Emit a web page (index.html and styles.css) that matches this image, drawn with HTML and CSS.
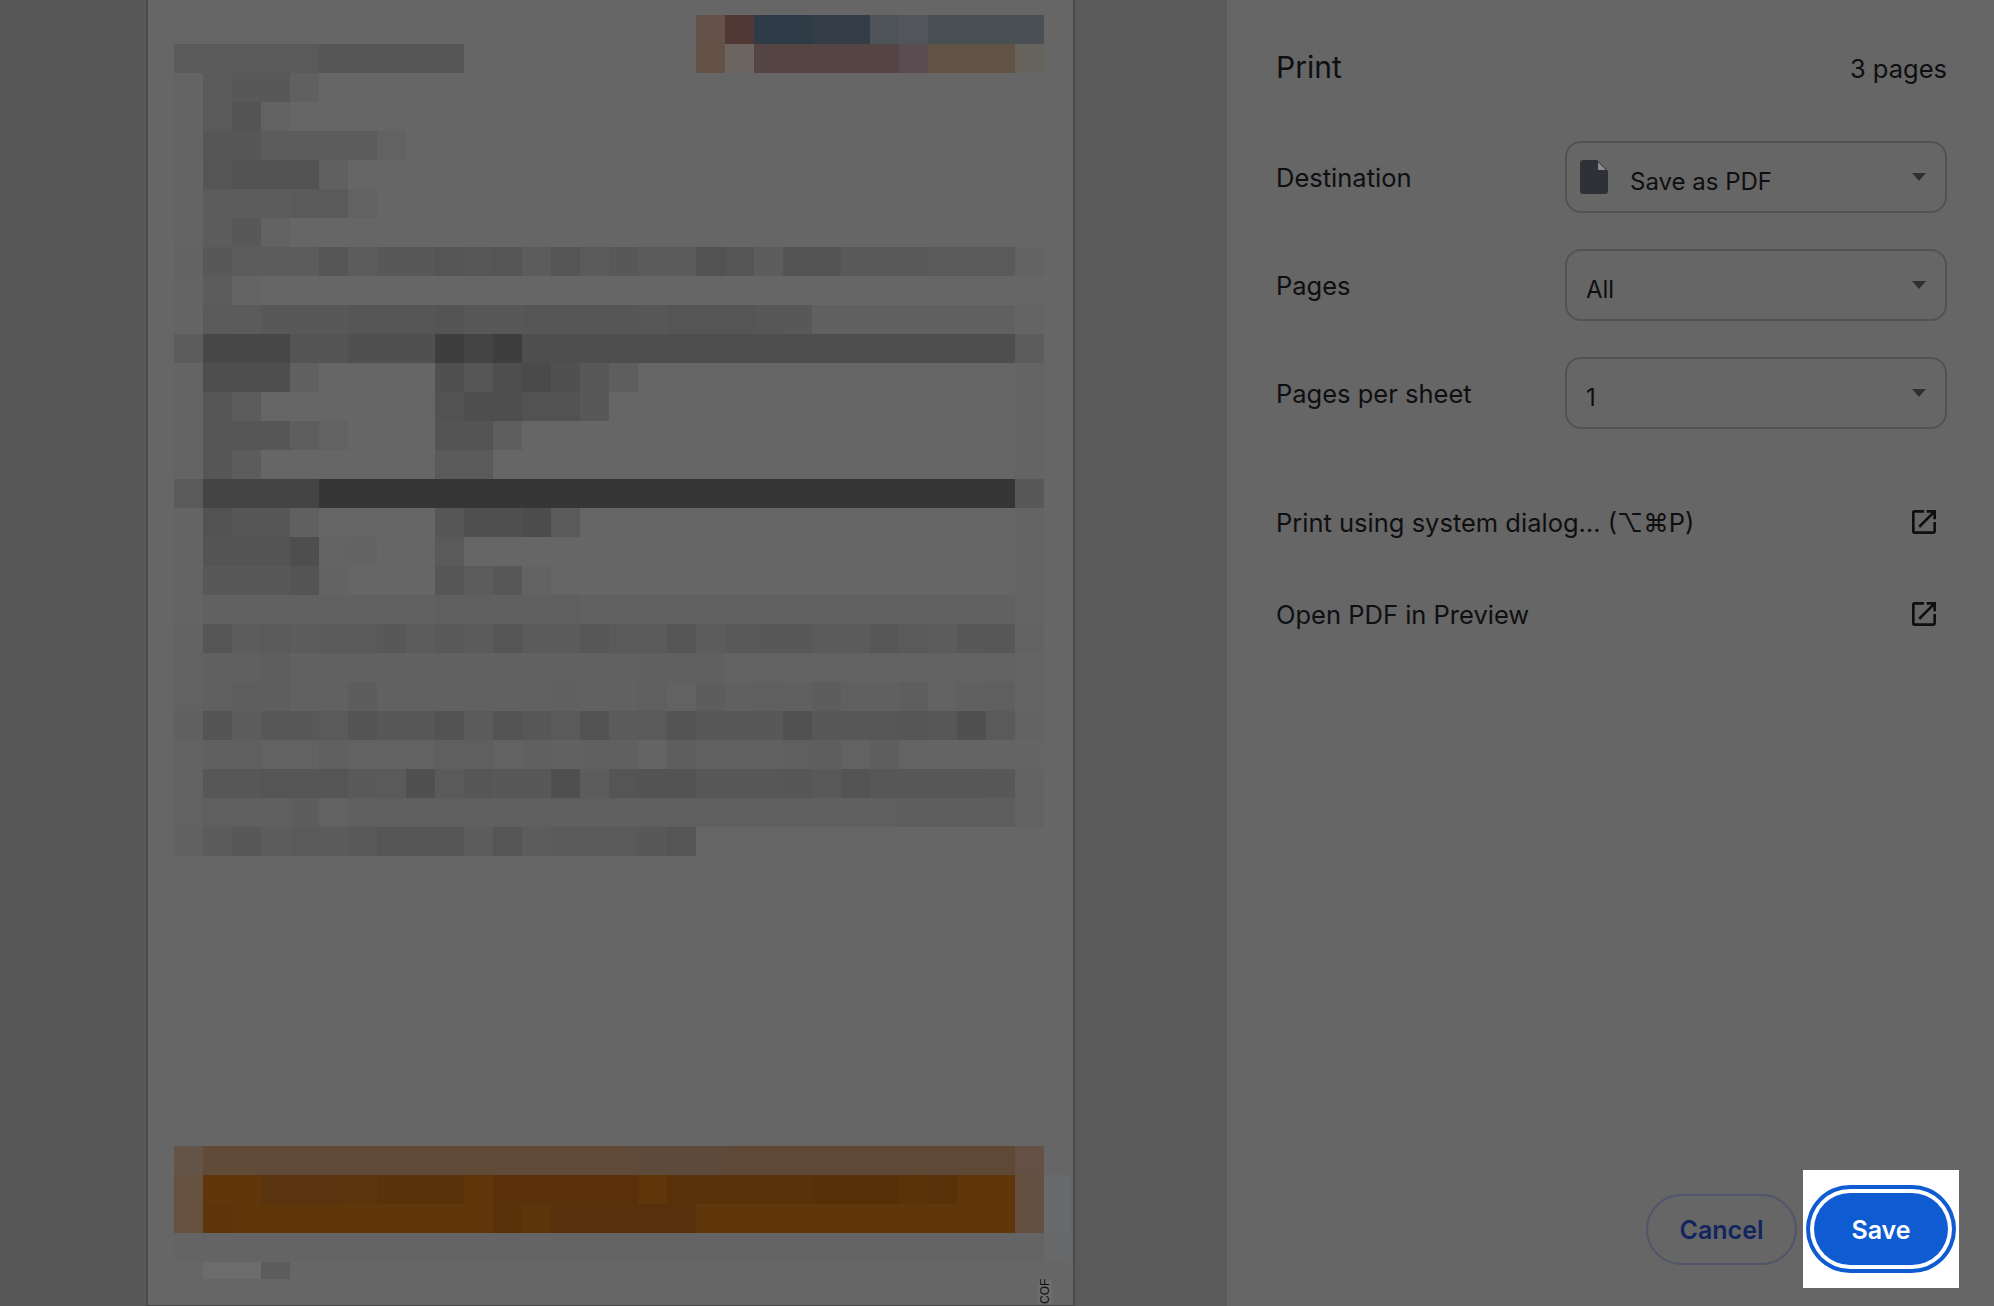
FILE: index.html
```html
<!DOCTYPE html>
<html lang="en">
<head>
<meta charset="utf-8">
<title>Print</title>
<link rel="stylesheet" href="styles.css">
</head>
<body>
<main class="preview">
  <section class="sheet">
    <div class="mosaic" id="mosaic"></div>
    <span class="stamp">COF</span>
  </section>
</main>
<aside class="panel">
  <header class="panel-head">
    <h1 class="panel-title">Print</h1>
    <span class="panel-count">3 pages</span>
  </header>
  <div class="settings">
    <div class="setting">
      <span class="setting-label">Destination</span>
      <div class="select select-icon">
        <svg class="doc-icon" viewBox="0 0 28 34" aria-hidden="true">
          <path class="doc-body" d="M3 0H17L28 11V31a3 3 0 0 1-3 3H3a3 3 0 0 1-3-3V3a3 3 0 0 1 3-3z"/>
          <path class="doc-fold" d="M18 2V10H26z"/>
        </svg>
        <span class="select-value">Save as PDF</span>
        <i class="caret"></i>
      </div>
    </div>
    <div class="setting">
      <span class="setting-label">Pages</span>
      <div class="select">
        <span class="select-value">All</span>
        <i class="caret"></i>
      </div>
    </div>
    <div class="setting">
      <span class="setting-label">Pages per sheet</span>
      <div class="select">
        <span class="select-value">1</span>
        <i class="caret"></i>
      </div>
    </div>
  </div>
  <nav class="links">
    <a class="link">
      <span class="link-text">Print using system dialog… (⌥⌘P)</span>
      <svg class="open-icon" viewBox="0 0 24 24" aria-hidden="true"><path d="M19 19H5V5h7V3H5a2 2 0 0 0-2 2v14a2 2 0 0 0 2 2h14c1.100 0 2-.9 2-2v-7h-2v7zM14 3v2h3.590l-9.830 9.830 1.410 1.410L19 6.410V10h2V3h-7z"/></svg>
    </a>
    <a class="link">
      <span class="link-text">Open PDF in Preview</span>
      <svg class="open-icon" viewBox="0 0 24 24" aria-hidden="true"><path d="M19 19H5V5h7V3H5a2 2 0 0 0-2 2v14a2 2 0 0 0 2 2h14c1.100 0 2-.9 2-2v-7h-2v7zM14 3v2h3.590l-9.830 9.830 1.410 1.410L19 6.410V10h2V3h-7z"/></svg>
    </a>
  </nav>
  <footer class="actions">
    <button class="btn btn-cancel">Cancel</button>
    <div class="spotlight">
      <button class="btn btn-save">Save</button>
    </div>
  </footer>
</aside>
<script src="mosaic.js"></script>
</body>
</html>
```

FILE: styles.css
```css
* { box-sizing: border-box; }

html, body { margin: 0; height: 100%; }

body {
  display: flex;
  width: 1994px;
  height: 1306px;
  overflow: hidden;
  background: #585858;
  color: #0e0f11;
  font-family: Inter, "Liberation Sans", sans-serif;
}

.preview {
  display: flex;
  flex: 0 0 1227px;
  padding-left: 146px;
  background: linear-gradient(to right, #585858 146px, #5a5a5a 146px);
}

.sheet {
  position: relative;
  flex: 0 0 929px;
  height: 1306px;
  padding: 15px 0 0 26px;
  background: #666;
  border-left: 2px solid #4a4a4a;
  border-right: 2px solid #4a4a4a;
  border-bottom: 1px solid #444;
}

.mosaic {
  display: grid;
  grid-template-columns: repeat(30, 29px) 27px;
  grid-template-rows: repeat(43, 29px) 17px;
}

.stamp {
  position: absolute;
  left: 890px;
  top: 1280px;
  padding: 0 1px;
  height: 24px;
  writing-mode: vertical-rl;
  transform: rotate(180deg);
  background: #6e6e6e;
  color: #0e0e0e;
  font-family: "Liberation Sans", sans-serif;
  font-size: 12px;
  line-height: 12px;
}

.panel {
  display: flex;
  flex-direction: column;
  flex: 0 0 767px;
  height: 1306px;
  padding: 0 47px 0 49px;
  background: #666;
}

.panel-head {
  display: flex;
  justify-content: space-between;
  align-items: baseline;
  height: 141px;
  padding-top: 49px;
}

.panel-title {
  margin: 0;
  font-size: 30px;
  line-height: 36px;
  font-weight: 400;
}

.panel-count {
  font-size: 25.500px;
  line-height: 36px;
}

.settings {
  display: flex;
  flex-direction: column;
  gap: 36px;
}

.setting {
  display: flex;
  align-items: center;
  justify-content: space-between;
  height: 72px;
}

.setting-label,
.link-text {
  padding-top: 1px;
  font-size: 25.500px;
}

.select {
  display: flex;
  align-items: center;
  width: 382px;
  height: 72px;
  padding: 0 19px 0 19px;
  border: 2px solid #525252;
  border-radius: 16px;
}

.select-icon {
  padding-left: 13px;
  gap: 22px;
}

.select-value {
  padding-top: 8px;
  font-size: 24px;
}

.doc-icon {
  flex: none;
  width: 28px;
  height: 34px;
}

.doc-body { fill: #2e3136; }
.doc-fold { fill: #8c8c8c; }

.caret {
  flex: none;
  width: 0;
  height: 0;
  margin-left: auto;
  border-style: solid;
  border-width: 8px 7px 0;
  border-color: #303030 transparent transparent;
}

.links {
  display: flex;
  flex-direction: column;
  margin-top: 47px;
}

.link {
  display: flex;
  align-items: center;
  justify-content: space-between;
  height: 92px;
}

.open-icon {
  flex: none;
  width: 32px;
  height: 32px;
  margin-right: 7px;
  fill: #0e0f11;
}

.actions {
  display: flex;
  align-items: center;
  justify-content: flex-end;
  gap: 6px;
  margin: auto -12px 0 0;
  padding-bottom: 18px;
}

.btn {
  height: 72px;
  padding: 2px 0 0;
  border: 0;
  border-radius: 36px;
  font-family: inherit;
  font-size: 25px;
  font-weight: 600;
}

.btn-cancel {
  width: 151px;
  height: 71px;
  background: transparent;
  border: 2px solid #50556a;
  color: #122560;
}

.spotlight {
  display: flex;
  align-items: center;
  justify-content: center;
  width: 156px;
  height: 118px;
  background: #fff;
}

.btn-save {
  width: 134px;
  background: #0f5bd2;
  color: #fff;
  box-shadow: 0 0 0 4px #fff, 0 0 0 8px #0f5bd2;
}
```

FILE: mosaic.js
```js
// Blurred document preview: one string per row of tiles.
// Token = grey ("5a") or colour ("6f5a50"), "*n" repeats it, "-" leaves the paper showing.
var rows = [
  "-*18 64514a 503834 2e3b46*2 323d48*2 4e5358 52565a 4a4f54*4",
  "5a*5 55*5 -*8 645246 6c6460 544444*5 5a4c50 605244*3 66625c",
  "64 5a 58 58 60",
  "64 5a 54 62",
  "64 56 56 5c 5c 5c 5c 62",
  "64 55 52 52 52 60",
  "64 5c 5c 5c 5a 5a 62",
  "64 5c 58 62",
  "63 58 5c 5c 5c 55 5c 58 58 55 57 55 5c 55 5b 58 5b 5b 52 55 5d 54 54 59 59 59 5a 5a 5a 63",
  "64 5c 64",
  "64 5a 5b 58 58 58 56 56 56 54 58 58 56 56 56 56 57 55 55 55 57 58 60*7 64",
  "5c 47*3 54 54 50*3 3e 44 3e 4e*17 5c",
  "64 4e*3 60 -*4 50 56 4e 4a 50 58 5e -*13 64",
  "64 56 5c -*6 52 4e 4e 52 52 58 -*14 64",
  "64 56 56 56 5e 62 -*3 54 54 5e -*17 64",
  "64 56 5c -*6 5a 5a -*18 64",
  "5a 44*4 36*24 58",
  "64 52 56 56 60 -*4 56 50 50 4c 5a -*15 64",
  "64 54 54 54 4e 64 63 -*2 5a -*19 64",
  "64 58 58 58 54 63 -*3 56 5c 58 63 -*16 64",
  "64 61*8 5f 5f 60 60 5f 61*15 64",
  "62 55 5c 5a 5c 5a 5a 58 5c 59 5b 55 5b 5b 57 5a 5a 56 5c 59 58 58 5b 5b 57 5a 5c 58 57 62",
  "62 60 60 5e 61*12 60 60 60 62*10 64",
  "62 60 5e 5e 61 61 5d 61*6 60 61 61 5f 62 5d 60 5f 60 5d 60 60 5e 62 60 5f 64",
  "60 54 5c 58 58 5a 54 58 58 53 5b 54 57 5a 53 5b 5a 54 58 58 58 51 58 57 57 56 57 50 5a 63",
  "62 60 5f 62 62 5f 62 62 62 5f 5f 62 60 61 60 60 64 5e 61 61 61 5f 5e 62 5e 64*4 65",
  "62 57 57 55 55 55 59 5a 50 5a 56 58 58 4f 5c 55 53 53 58 58 57 56 59 54 57 57 57 57 58 62",
  "62 5f*3 5d 62 5f*19 5e 5e 5e 5e 62",
  "61 5b 58 5c 5a 5b 59 56 56 56 5c 55 5c 5a 5a 5a 58 55",
  "", "", "", "", "", "", "", "", "", "",
  "645448 624a38*15 5e4a3a*3 604836*10 645044",
  "665040 60360a*2 5a340e*3 5c350c 5a320a*3 5e360a 5a300a*5 5e360a 5a320a*5 583008*3 5a3308 583208 60360a*2 645040 686a6b",
  "665040 5e350a 60370a*9 5a320a 5c350a 58300c*5 60370a*11 645040 686a6b",
  "64*30 676869",
  "- 6c 6c 5c -*26 - 676869"
];

var grid = document.getElementById("mosaic");

rows.forEach(function (row, r) {
  var col = 0;
  row.split(" ").forEach(function (token) {
    if (!token) return;
    var parts = token.split("*");
    var value = parts[0];
    var count = parts[1] ? parseInt(parts[1], 10) : 1;
    if (value !== "-") {
      var tile = document.createElement("i");
      var hex = value.length === 2 ? value + value + value : value;
      tile.style.gridRow = r + 1;
      tile.style.gridColumn = (col + 1) + " / span " + count;
      tile.style.background = "#" + hex;
      grid.appendChild(tile);
    }
    col += count;
  });
});
```
